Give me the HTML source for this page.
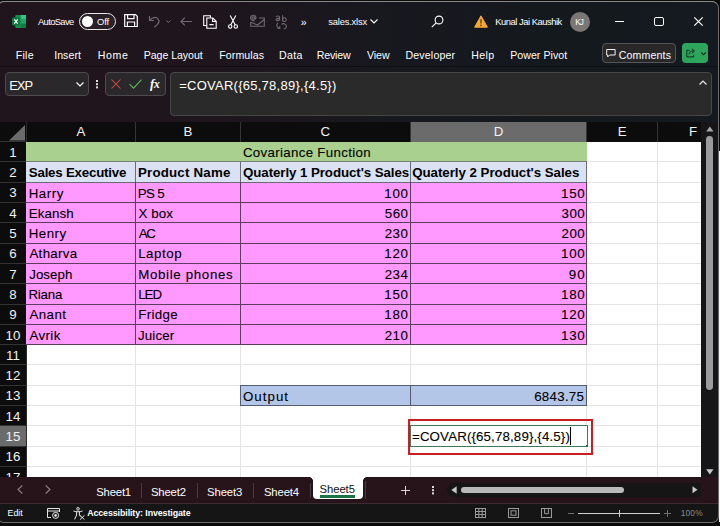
<!DOCTYPE html><html><head><meta charset="utf-8"><title>sales.xlsx - Excel</title><style>
*{box-sizing:border-box;margin:0;padding:0}
html,body{width:720px;height:526px;overflow:hidden;background:#0a0a0a}
body{font-family:"Liberation Sans",sans-serif;color:#fff;position:relative}
.abs,.t,.ch{position:absolute}
.t,.ch{white-space:pre;line-height:1}
.k{color:#000;-webkit-text-stroke:0.1px #000}
#win{position:absolute;left:-3.5px;top:1px;width:722.3px;height:522px;border-radius:7px;overflow:hidden;background:#0d0d0d;}
#win>div#in{position:absolute;left:3.5px;top:-1px;width:720px;height:526px}
#winb{position:absolute;left:-3.5px;top:1px;width:722.3px;height:522px;border-radius:7px;border:1px solid #6c6c6c;border-top-color:#8a8a8a;pointer-events:none}
#topbg{position:absolute;left:0;top:0;width:720px;height:122px;background:linear-gradient(90deg,#21151d 0%,#1f151d 28%,#18181f 52%,#14191e 75%,#141a1f 100%)}
.b{font-weight:700}
.kb{color:#000}
.ch{font-size:13.3px;color:#f2f2f2;text-align:center}
svg{position:absolute;overflow:visible}
</style></head><body>
<div class="abs" style="left:718.5px;top:151px;width:2px;height:371px;background:#f4f4f4"></div>
<div id="win"><div id="in">
<div id="topbg"></div>
<svg style="left:12px;top:14.5px" width="14" height="13" viewBox="0 0 14 13"><rect x="3.5" y="0" width="10.5" height="13" rx="1.2" fill="#21a366"/><rect x="8.7" y="0" width="5.3" height="4.3" fill="#33c481"/><rect x="8.7" y="4.3" width="5.3" height="4.4" fill="#21a366"/><rect x="8.7" y="8.7" width="5.3" height="4.3" fill="#107c41"/><rect x="3.5" y="0" width="5.2" height="13" fill="#107c41" opacity=".55"/><rect x="0" y="2.6" width="8" height="7.8" rx="1" fill="#0f7a40"/><path d="M2.3 4.3 L5.7 8.7 M5.7 4.3 L2.3 8.7" stroke="#fff" stroke-width="1.2" fill="none"/></svg>
<span class="t" style="left:38.00px;top:17.00px;font-size:9.4px;letter-spacing:-0.636px;">AutoSave</span>
<div class="abs" style="left:79px;top:13px;width:36.5px;height:17px;border:1px solid #e8e8e8;border-radius:9px;background:#2a2128"></div>
<div class="abs" style="left:81.7px;top:15.7px;width:11.6px;height:11.6px;border-radius:6px;background:#fff"></div>
<span class="t" style="left:97.00px;top:17.00px;font-size:9.4px;letter-spacing:-0.087px;">Off</span>
<svg style="left:124.4px;top:14.4px" width="14" height="13.2" viewBox="0 0 14 13.2" fill="none" stroke="#fff" stroke-width="1.2"><path d="M0.7 0.7 H11.6 L13.3 2.4 V12.5 H0.7z"/><path d="M3.6 0.8 V4.6 H10 V0.8"/><path d="M3.4 12.5 V8 H10.6 V12.5"/></svg>
<svg style="left:148px;top:15px" width="13" height="13" viewBox="0 0 13 13" fill="none" stroke="#6f6870" stroke-width="1.2"><path d="M1.5 1 V5.5 H6"/><path d="M1.8 5.3 C4 2.2 8 1.6 10 3.8 C12.2 6.2 10.6 9 6.2 12.2"/></svg>
<svg style="left:166px;top:19.8px" width="4.8" height="3" viewBox="0 0 4.8 3" fill="none" stroke="#6f6870" stroke-width="1"><path d="M0.3 0.4 L2.4 2.5 L4.5 0.4"/></svg>
<svg style="left:180px;top:16.5px" width="12" height="9" viewBox="0 0 12 9" fill="none" stroke="#6f6870" stroke-width="1.2"><path d="M12 4.5 H1 M4.8 0.6 L1 4.5 L4.8 8.4"/></svg>
<svg style="left:203px;top:14.5px" width="14" height="14" viewBox="0 0 14 14" fill="none" stroke="#fff" stroke-width="1.1"><path d="M3.6 10.5 H0.7 V0.8 H7.4 V2.8"/><path d="M3.8 3 H9.8 L13.2 6.3 V13.2 H3.8z"/><path d="M9.6 3.2 V6.5 H13"/><path d="M6.4 9.6 H10.6" stroke-width="1.3"/></svg>
<svg style="left:228px;top:14.5px" width="10" height="14" viewBox="0 0 10 14" fill="none" stroke="#fff" stroke-width="1.1"><path d="M2.2 0.5 L7.3 10 M7.8 0.5 L2.7 10"/><circle cx="2.2" cy="11.5" r="1.7"/><circle cx="7.8" cy="11.5" r="1.7"/></svg>
<svg style="left:250px;top:15px" width="15" height="12" viewBox="0 0 15 12" fill="none" stroke="#6f6870" stroke-width="1.1"><path d="M9 3 H14.3 V11.3 H0.7 V7"/><path d="M1 7.2 L7.5 10 L14.3 4.5"/><circle cx="3.2" cy="3" r="1.2"/><path d="M4.6 1.6 V4 C6.2 4.6 6.6 1.2 4.6 0.5 C2.6 -0.3 0.4 1 0.6 3.2 C0.8 5.4 3 6 4.6 5.4"/></svg>
<svg style="left:275px;top:14.5px" width="14" height="15" viewBox="0 0 14 15" fill="none" stroke="#6f6870" stroke-width="1.1"><path d="M4.6 5.5 V2.6 C4.6 0.4 1.2 0.6 1 2 M4.6 3.4 C0.6 3 0.2 5.6 2.4 5.6 C3.6 5.6 4.6 4.6 4.6 3.8"/><path d="M7.6 0.3 V6.6 M7.6 3.6 C8.8 2.2 11.2 2.6 11.2 4.6 C11.2 6.6 8.8 7 7.6 5.6"/><path d="M3 8 C1 9.6 1.4 12.6 4.6 13.2 M4.8 11.2 V13.4 H2.6"/><path d="M6.6 9.4 C8 8 11 8.4 11.4 11 C11.6 12.8 10 14 8.6 14"/></svg>
<span class="t" style="left:300.82px;top:16.60px;font-size:10.5px;letter-spacing:0.000px;">»</span>
<span class="t" style="left:328.35px;top:17.00px;font-size:9.4px;letter-spacing:-0.206px;">sales.xlsx</span>
<svg style="left:370px;top:19px" width="8" height="5" viewBox="0 0 8 5" fill="none" stroke="#fff" stroke-width="1.1"><path d="M0.5 0.5 L4 4 L7.5 0.5"/></svg>
<svg style="left:431px;top:15px" width="13" height="13" viewBox="0 0 13 13" fill="none" stroke="#fff" stroke-width="1.1"><circle cx="8" cy="5" r="3.9"/><path d="M5.2 7.8 L0.8 12.2"/></svg>
<svg style="left:473.5px;top:14.5px" width="14" height="13" viewBox="0 0 14 13"><path d="M7 0.8 L13.4 12.2 H0.6z" fill="#f4a836" stroke="#f4a836" stroke-width="1" stroke-linejoin="round"/><path d="M7 4.2 V8.4" stroke="#5a3a0a" stroke-width="1.3"/><circle cx="7" cy="10.4" r=".8" fill="#5a3a0a"/></svg>
<span class="t" style="left:495.25px;top:17.00px;font-size:9.4px;letter-spacing:-0.472px;">Kunal Jai Kaushik</span>
<div class="abs" style="left:569.5px;top:11.5px;width:20px;height:20px;border-radius:10px;background:#7c7675"></div>
<span class="t" style="left:575.27px;top:18.60px;font-size:8.2px;letter-spacing:-1.075px;">KJ</span>
<div class="abs" style="left:615px;top:20.5px;width:9px;height:1.2px;background:#fff"></div>
<div class="abs" style="left:654px;top:16.5px;width:9.5px;height:9.5px;border:1.2px solid #fff;border-radius:2px"></div>
<svg style="left:693.5px;top:16.5px" width="9" height="9" viewBox="0 0 9 9" stroke="#fff" stroke-width="1.2"><path d="M0.3 0.3 L8.7 8.7 M8.7 0.3 L0.3 8.7"/></svg>
<span class="t" style="left:15.73px;top:50.00px;font-size:10.6px;letter-spacing:0.250px;">File</span>
<span class="t" style="left:54.20px;top:50.00px;font-size:10.6px;letter-spacing:0.045px;">Insert</span>
<span class="t" style="left:97.83px;top:50.00px;font-size:10.6px;letter-spacing:0.575px;">Home</span>
<span class="t" style="left:143.72px;top:50.00px;font-size:10.6px;letter-spacing:-0.050px;">Page Layout</span>
<span class="t" style="left:219.32px;top:50.00px;font-size:10.6px;letter-spacing:0.075px;">Formulas</span>
<span class="t" style="left:279.02px;top:50.00px;font-size:10.6px;letter-spacing:0.300px;">Data</span>
<span class="t" style="left:316.73px;top:50.00px;font-size:10.6px;letter-spacing:-0.155px;">Review</span>
<span class="t" style="left:366.88px;top:50.00px;font-size:10.6px;letter-spacing:-0.008px;">View</span>
<span class="t" style="left:405.52px;top:50.00px;font-size:10.6px;letter-spacing:0.156px;">Developer</span>
<span class="t" style="left:471.32px;top:50.00px;font-size:10.6px;letter-spacing:0.367px;">Help</span>
<span class="t" style="left:510.23px;top:50.00px;font-size:10.6px;letter-spacing:0.037px;">Power Pivot</span>
<div class="abs" style="left:602px;top:43px;width:73.5px;height:20px;border:1px solid #555;border-radius:4px;background:#282829"></div>
<svg style="left:605.6px;top:48.6px" width="9.8" height="8.6" viewBox="0 0 11 10" fill="none" stroke="#fff" stroke-width="1.1"><path d="M0.6 0.6 H10.4 V7 H4 L1.8 9.2 V7 H0.6z"/></svg>
<span class="t" style="left:618.80px;top:50.00px;font-size:10.6px;letter-spacing:0.132px;">Comments</span>
<div class="abs" style="left:682px;top:43px;width:25.5px;height:20px;border-radius:4px;background:#2ea55d"></div>
<svg style="left:686px;top:48.4px" width="9.8" height="9.6" viewBox="0 0 11 11" fill="none" stroke="#102a18" stroke-width="1.1"><path d="M4 2.6 H0.8 V10.2 H8.6 V7.6"/><path d="M3.4 7.4 C3.6 4.6 5.4 3.4 8 3.4 M6.6 0.8 L9.6 3.4 L6.6 6"/></svg>
<svg style="left:700.5px;top:51.5px" width="5" height="4" viewBox="0 0 5 4" fill="none" stroke="#102a18" stroke-width="1.1"><path d="M0.3 0.5 L2.5 2.8 L4.7 0.5"/></svg>
<div class="abs" style="left:0;top:66px;width:720px;height:1px;background:rgba(0,0,0,.35)"></div>
<div class="abs" style="left:5px;top:72px;width:83.5px;height:23.5px;border:1px solid #4d494c;border-radius:4px;background:#2b282b"></div>
<span class="t" style="left:9.20px;top:79.70px;font-size:12.9px;letter-spacing:-0.912px;">EXP</span>
<svg style="left:76px;top:82px" width="8" height="5" viewBox="0 0 8 5" fill="none" stroke="#fff" stroke-width="1.1"><path d="M0.5 0.5 L4 4 L7.5 0.5"/></svg>
<div class="abs" style="left:96.4px;top:80px;width:1.6px;height:1.6px;background:#ddd;box-shadow:0 3.2px 0 #ddd,0 6.4px 0 #ddd"></div>
<div class="abs" style="left:105px;top:72px;width:60.5px;height:23.5px;border:1px solid #4d494c;border-radius:4px;background:#2b282b"></div>
<svg style="left:111px;top:79px" width="10" height="10" viewBox="0 0 10 10" stroke="#dc4c47" stroke-width="1.05"><path d="M0.5 0.5 L9.5 9.5 M9.5 0.5 L0.5 9.5"/></svg>
<svg style="left:129px;top:79px" width="13" height="10" viewBox="0 0 13 10" fill="none" stroke="#58b860" stroke-width="1.05"><path d="M0.5 5.2 L4.6 9.2 L12.5 0.6"/></svg>
<span class="t" style="left:150px;top:76.5px;font-size:13px;color:#fff;font-family:'Liberation Serif',serif;font-style:italic;letter-spacing:-0.3px;font-weight:700">f<span style="font-size:11.5px">x</span></span>
<div class="abs" style="left:169.5px;top:71.8px;width:542px;height:44px;border:1px solid #474747;border-radius:4px;background:#2a2a2a"></div>
<span class="t" style="left:179.18px;top:78.75px;font-size:13px;letter-spacing:0.259px;">=COVAR({65,78,89},{4.5})</span>
<svg style="left:699px;top:80px" width="8" height="5" viewBox="0 0 8 5" fill="none" stroke="#e8e8e8" stroke-width="1.2"><path d="M0.5 4.5 L4 1 L7.5 4.5"/></svg>
<div class="abs" style="left:0;top:122px;width:720px;height:355.2px;background:#0c0c0c"></div>
<div class="abs" style="left:26px;top:141.6px;width:675px;height:335.6px;background:#fff"></div>
<div class="abs" style="left:26px;top:161.4px;width:675px;height:1px;background:#e4e4e4"></div>
<div class="abs" style="left:26px;top:181.7px;width:675px;height:1px;background:#e4e4e4"></div>
<div class="abs" style="left:26px;top:202.0px;width:675px;height:1px;background:#e4e4e4"></div>
<div class="abs" style="left:26px;top:222.3px;width:675px;height:1px;background:#e4e4e4"></div>
<div class="abs" style="left:26px;top:242.6px;width:675px;height:1px;background:#e4e4e4"></div>
<div class="abs" style="left:26px;top:262.9px;width:675px;height:1px;background:#e4e4e4"></div>
<div class="abs" style="left:26px;top:283.2px;width:675px;height:1px;background:#e4e4e4"></div>
<div class="abs" style="left:26px;top:303.5px;width:675px;height:1px;background:#e4e4e4"></div>
<div class="abs" style="left:26px;top:323.8px;width:675px;height:1px;background:#e4e4e4"></div>
<div class="abs" style="left:26px;top:344.1px;width:675px;height:1px;background:#e4e4e4"></div>
<div class="abs" style="left:26px;top:364.4px;width:675px;height:1px;background:#e4e4e4"></div>
<div class="abs" style="left:26px;top:384.7px;width:675px;height:1px;background:#e4e4e4"></div>
<div class="abs" style="left:26px;top:405.0px;width:675px;height:1px;background:#e4e4e4"></div>
<div class="abs" style="left:26px;top:425.3px;width:675px;height:1px;background:#e4e4e4"></div>
<div class="abs" style="left:26px;top:445.6px;width:675px;height:1px;background:#e4e4e4"></div>
<div class="abs" style="left:26px;top:465.9px;width:675px;height:1px;background:#e4e4e4"></div>
<div class="abs" style="left:135.2px;top:141.6px;width:1px;height:335.6px;background:#e4e4e4"></div>
<div class="abs" style="left:239.9px;top:141.6px;width:1px;height:335.6px;background:#e4e4e4"></div>
<div class="abs" style="left:409.5px;top:141.6px;width:1px;height:335.6px;background:#e4e4e4"></div>
<div class="abs" style="left:586.4px;top:141.6px;width:1px;height:335.6px;background:#e4e4e4"></div>
<div class="abs" style="left:657.2px;top:141.6px;width:1px;height:335.6px;background:#e4e4e4"></div>
<div class="abs" style="left:410px;top:122px;width:176.89999999999998px;height:19.599999999999994px;background:#6b6b6b"></div>
<span class="ch" style="left:26px;width:109.69999999999999px;top:125.4px">A</span>
<div class="abs" style="left:135.2px;top:122px;width:1px;height:19.599999999999994px;background:#353535"></div>
<span class="ch" style="left:135.7px;width:104.70000000000002px;top:125.4px">B</span>
<div class="abs" style="left:239.9px;top:122px;width:1px;height:19.599999999999994px;background:#353535"></div>
<span class="ch" style="left:240.4px;width:169.6px;top:125.4px">C</span>
<div class="abs" style="left:409.5px;top:122px;width:1px;height:19.599999999999994px;background:#353535"></div>
<span class="ch" style="left:410px;width:176.89999999999998px;top:125.4px">D</span>
<div class="abs" style="left:586.4px;top:122px;width:1px;height:19.599999999999994px;background:#353535"></div>
<span class="ch" style="left:586.9px;width:70.80000000000007px;top:125.4px">E</span>
<div class="abs" style="left:657.2px;top:122px;width:1px;height:19.599999999999994px;background:#353535"></div>
<span class="ch" style="left:657.7px;width:70.79999999999995px;top:125.4px">F</span>
<div class="abs" style="left:25.5px;top:122px;width:1px;height:355.2px;background:#2c2c2c"></div>
<div class="abs" style="left:0px;top:140.9px;width:26px;height:1px;background:#333"></div>
<svg style="left:9.2px;top:124.5px" width="16" height="15.5" viewBox="0 0 16 15.5"><path d="M16 0 V15.5 H0z" fill="#6b6b6b"/></svg>
<div class="abs" style="left:0;top:425.8px;width:26px;height:20.3px;background:#6b6b6b"></div>
<span class="ch" style="left:0;width:26px;top:145.79999999999998px">1</span>
<div class="abs" style="left:0;top:161.4px;width:26px;height:1px;background:#333"></div>
<span class="ch" style="left:0;width:26px;top:166.1px">2</span>
<div class="abs" style="left:0;top:181.7px;width:26px;height:1px;background:#333"></div>
<span class="ch" style="left:0;width:26px;top:186.39999999999998px">3</span>
<div class="abs" style="left:0;top:202.0px;width:26px;height:1px;background:#333"></div>
<span class="ch" style="left:0;width:26px;top:206.7px">4</span>
<div class="abs" style="left:0;top:222.3px;width:26px;height:1px;background:#333"></div>
<span class="ch" style="left:0;width:26px;top:227.0px">5</span>
<div class="abs" style="left:0;top:242.6px;width:26px;height:1px;background:#333"></div>
<span class="ch" style="left:0;width:26px;top:247.29999999999998px">6</span>
<div class="abs" style="left:0;top:262.9px;width:26px;height:1px;background:#333"></div>
<span class="ch" style="left:0;width:26px;top:267.59999999999997px">7</span>
<div class="abs" style="left:0;top:283.2px;width:26px;height:1px;background:#333"></div>
<span class="ch" style="left:0;width:26px;top:287.9px">8</span>
<div class="abs" style="left:0;top:303.5px;width:26px;height:1px;background:#333"></div>
<span class="ch" style="left:0;width:26px;top:308.2px">9</span>
<div class="abs" style="left:0;top:323.8px;width:26px;height:1px;background:#333"></div>
<span class="ch" style="left:0;width:26px;top:328.5px">10</span>
<div class="abs" style="left:0;top:344.1px;width:26px;height:1px;background:#333"></div>
<span class="ch" style="left:0;width:26px;top:348.8px">11</span>
<div class="abs" style="left:0;top:364.4px;width:26px;height:1px;background:#333"></div>
<span class="ch" style="left:0;width:26px;top:369.09999999999997px">12</span>
<div class="abs" style="left:0;top:384.7px;width:26px;height:1px;background:#333"></div>
<span class="ch" style="left:0;width:26px;top:389.4px">13</span>
<div class="abs" style="left:0;top:405.0px;width:26px;height:1px;background:#333"></div>
<span class="ch" style="left:0;width:26px;top:409.7px">14</span>
<div class="abs" style="left:0;top:425.3px;width:26px;height:1px;background:#333"></div>
<span class="ch" style="left:0;width:26px;top:430.0px">15</span>
<div class="abs" style="left:0;top:445.6px;width:26px;height:1px;background:#333"></div>
<span class="ch" style="left:0;width:26px;top:450.3px">16</span>
<div class="abs" style="left:0;top:465.9px;width:26px;height:1px;background:#333"></div>
<span class="ch" style="left:0;width:26px;top:470.59999999999997px">17</span>
<div class="abs" style="left:0;top:486.2px;width:26px;height:1px;background:#333"></div>
<div class="abs" style="left:26px;top:141.6px;width:560.9px;height:20.3px;background:#a9d08e"></div>
<div class="abs" style="left:26px;top:161.9px;width:560.9px;height:20.3px;background:#d9e1f2"></div>
<div class="abs" style="left:26px;top:182.2px;width:560.9px;height:162.40000000000003px;background:#ff99ff"></div>
<div class="abs" style="left:240.4px;top:385.2px;width:346.5px;height:20.3px;background:#b4c6e7"></div>
<div class="abs" style="left:26px;top:161.4px;width:560.9px;height:1px;background:#777f70"></div>
<div class="abs" style="left:26px;top:181.7px;width:560.9px;height:1px;background:#6b6b78"></div>
<div class="abs" style="left:26px;top:202.0px;width:560.9px;height:1px;background:#5e3b60"></div>
<div class="abs" style="left:26px;top:222.3px;width:560.9px;height:1px;background:#5e3b60"></div>
<div class="abs" style="left:26px;top:242.6px;width:560.9px;height:1px;background:#5e3b60"></div>
<div class="abs" style="left:26px;top:262.9px;width:560.9px;height:1px;background:#5e3b60"></div>
<div class="abs" style="left:26px;top:283.2px;width:560.9px;height:1px;background:#5e3b60"></div>
<div class="abs" style="left:26px;top:303.5px;width:560.9px;height:1px;background:#5e3b60"></div>
<div class="abs" style="left:26px;top:323.8px;width:560.9px;height:1px;background:#5e3b60"></div>
<div class="abs" style="left:26px;top:344.1px;width:560.9px;height:1px;background:#5e3b60"></div>
<div class="abs" style="left:135.2px;top:161.9px;width:1px;height:20.3px;background:#6a6e7a"></div>
<div class="abs" style="left:135.2px;top:182.2px;width:1px;height:162.40000000000003px;background:#5e3b60"></div>
<div class="abs" style="left:239.9px;top:161.9px;width:1px;height:20.3px;background:#6a6e7a"></div>
<div class="abs" style="left:239.9px;top:182.2px;width:1px;height:162.40000000000003px;background:#5e3b60"></div>
<div class="abs" style="left:409.5px;top:161.9px;width:1px;height:20.3px;background:#6a6e7a"></div>
<div class="abs" style="left:409.5px;top:182.2px;width:1px;height:162.40000000000003px;background:#5e3b60"></div>
<div class="abs" style="left:586.4px;top:161.9px;width:1px;height:20.3px;background:#6a6e7a"></div>
<div class="abs" style="left:586.4px;top:182.2px;width:1px;height:162.40000000000003px;background:#5e3b60"></div>
<div class="abs" style="left:239.9px;top:384.7px;width:347.5px;height:20.900000000000002px;border:1px solid #535c74"></div>
<div class="abs" style="left:409.5px;top:385.2px;width:1px;height:20.3px;background:#535c74"></div>
<span class="t k" style="left:242.88px;top:145.90px;font-size:13.3px;letter-spacing:0.322px;">Covariance Function</span>
<span class="t kb" style="left:28.82px;top:166.20px;font-size:13.3px;letter-spacing:-0.216px;font-weight:700;">Sales Executive</span>
<span class="t kb" style="left:137.93px;top:166.20px;font-size:13.3px;letter-spacing:0.205px;font-weight:700;">Product Name</span>
<span class="t kb" style="left:243.00px;top:166.20px;font-size:13.3px;letter-spacing:-0.071px;font-weight:700;">Quaterly 1 Product's Sales</span>
<span class="t kb" style="left:412.20px;top:166.20px;font-size:13.3px;letter-spacing:-0.031px;font-weight:700;">Quaterly 2 Product's Sales</span>
<span class="t k" style="left:28.68px;top:186.50px;font-size:13.3px;letter-spacing:0.562px;">Harry</span>
<span class="t k" style="left:137.68px;top:186.50px;font-size:13.3px;letter-spacing:-0.642px;">PS 5</span>
<span class="t k" style="left:384.29px;top:186.50px;font-size:13.3px;letter-spacing:0.743px;">100</span>
<span class="t k" style="left:561.09px;top:186.50px;font-size:13.3px;letter-spacing:0.743px;">150</span>
<span class="t k" style="left:28.68px;top:206.80px;font-size:13.3px;letter-spacing:0.105px;">Ekansh</span>
<span class="t k" style="left:138.43px;top:206.80px;font-size:13.3px;letter-spacing:0.131px;">X box</span>
<span class="t k" style="left:384.79px;top:206.80px;font-size:13.3px;letter-spacing:0.493px;">560</span>
<span class="t k" style="left:561.59px;top:206.80px;font-size:13.3px;letter-spacing:0.493px;">300</span>
<span class="t k" style="left:28.68px;top:227.10px;font-size:13.3px;letter-spacing:0.512px;">Henry</span>
<span class="t k" style="left:138.80px;top:227.10px;font-size:13.3px;letter-spacing:-1.475px;">AC</span>
<span class="t k" style="left:384.66px;top:227.10px;font-size:13.3px;letter-spacing:0.555px;">230</span>
<span class="t k" style="left:561.47px;top:227.10px;font-size:13.3px;letter-spacing:0.555px;">200</span>
<span class="t k" style="left:29.40px;top:247.40px;font-size:13.3px;letter-spacing:0.337px;">Atharva</span>
<span class="t k" style="left:138.18px;top:247.40px;font-size:13.3px;letter-spacing:0.540px;">Laptop</span>
<span class="t k" style="left:384.29px;top:247.40px;font-size:13.3px;letter-spacing:0.743px;">120</span>
<span class="t k" style="left:561.09px;top:247.40px;font-size:13.3px;letter-spacing:0.743px;">100</span>
<span class="t k" style="left:29.15px;top:267.70px;font-size:13.3px;letter-spacing:0.090px;">Joseph</span>
<span class="t k" style="left:138.18px;top:267.70px;font-size:13.3px;letter-spacing:0.669px;">Mobile phones</span>
<span class="t k" style="left:384.66px;top:267.70px;font-size:13.3px;letter-spacing:0.493px;">234</span>
<span class="t k" style="left:568.84px;top:267.70px;font-size:13.3px;letter-spacing:1.115px;">90</span>
<span class="t k" style="left:28.48px;top:288.00px;font-size:13.3px;letter-spacing:-0.231px;">Riana</span>
<span class="t k" style="left:138.18px;top:288.00px;font-size:13.3px;letter-spacing:-1.013px;">LED</span>
<span class="t k" style="left:384.29px;top:288.00px;font-size:13.3px;letter-spacing:0.743px;">150</span>
<span class="t k" style="left:561.09px;top:288.00px;font-size:13.3px;letter-spacing:0.743px;">180</span>
<span class="t k" style="left:29.40px;top:308.30px;font-size:13.3px;letter-spacing:0.444px;">Anant</span>
<span class="t k" style="left:138.18px;top:308.30px;font-size:13.3px;letter-spacing:0.380px;">Fridge</span>
<span class="t k" style="left:384.29px;top:308.30px;font-size:13.3px;letter-spacing:0.743px;">180</span>
<span class="t k" style="left:561.09px;top:308.30px;font-size:13.3px;letter-spacing:0.743px;">120</span>
<span class="t k" style="left:29.40px;top:328.60px;font-size:13.3px;letter-spacing:0.412px;">Avrik</span>
<span class="t k" style="left:138.05px;top:328.60px;font-size:13.3px;letter-spacing:0.140px;">Juicer</span>
<span class="t k" style="left:384.66px;top:328.60px;font-size:13.3px;letter-spacing:0.555px;">210</span>
<span class="t k" style="left:561.09px;top:328.60px;font-size:13.3px;letter-spacing:0.743px;">130</span>
<span class="t k" style="left:242.97px;top:389.50px;font-size:13.3px;letter-spacing:1.030px;">Output</span>
<span class="t k" style="left:534.17px;top:389.50px;font-size:13.3px;letter-spacing:0.288px;">6843.75</span>
<div class="abs" style="left:407.6px;top:418.8px;width:185.6px;height:35.8px;border:2.7px solid #cc1c24"></div>
<div class="abs" style="left:409.5px;top:425.2px;width:178.09999999999997px;height:21.5px;border:1px solid #3d7a55;background:#fff"></div>
<div class="abs" style="left:585.6999999999999px;top:444.90000000000003px;width:2.4px;height:2.4px;background:#2c6e45"></div>
<span class="t k" style="left:411.98px;top:430.10px;font-size:13.3px;letter-spacing:0.142px;">=COVAR({65,78,89},{4.5})</span>
<div class="abs" style="left:569.8px;top:426.8px;width:1px;height:18.5px;background:#000"></div>
<div class="abs" style="left:701px;top:122px;width:19px;height:355.2px;background:#161618"></div>
<svg style="left:705.8px;top:126px" width="7.7" height="6" viewBox="0 0 8 6"><path d="M4 0.3 L7.8 5.7 H0.2z" fill="#a8a8a8"/></svg>
<div class="abs" style="left:706.1px;top:135.7px;width:6.9px;height:254.7px;border-radius:3.4px;background:#9b9b9b"></div>
<svg style="left:705.8px;top:469px" width="7.7" height="5.8" viewBox="0 0 8 6"><path d="M4 5.7 L7.8 0.3 H0.2z" fill="#c8c8c8"/></svg>
<div class="abs" style="left:0;top:477.2px;width:720px;height:27px;background:#26141a"></div>
<div class="abs" style="left:0;top:503.6px;width:720px;height:20px;background:#151515"></div>
<div class="abs" style="left:0;top:503.3px;width:720px;height:1px;background:#3a2c31"></div>
<div class="abs" style="left:313px;top:476.2px;width:49.5px;height:23.3px;background:#fff;border-radius:0 0 4px 4px"></div>
<div class="abs" style="left:320px;top:495.4px;width:35px;height:2.2px;background:#1e7145"></div>
<div class="abs" style="left:309px;top:477.2px;width:4px;height:4px;background:radial-gradient(circle at 0 100%,#26141a 3.6px,#fff 4.2px)"></div>
<div class="abs" style="left:362.5px;top:477.2px;width:4px;height:4px;background:radial-gradient(circle at 100% 100%,#26141a 3.6px,#fff 4.2px)"></div>
<svg style="left:17px;top:485px" width="6" height="9" viewBox="0 0 6 9" fill="none" stroke="#8d7f85" stroke-width="1.1"><path d="M5.3 0.5 L1 4.5 L5.3 8.5"/></svg>
<svg style="left:44.5px;top:485px" width="6" height="9" viewBox="0 0 6 9" fill="none" stroke="#8d7f85" stroke-width="1.1"><path d="M0.7 0.5 L5 4.5 L0.7 8.5"/></svg>
<span class="t" style="left:96.20px;top:486.90px;font-size:11.3px;letter-spacing:-0.170px;">Sheet1</span>
<span class="t" style="left:150.90px;top:486.90px;font-size:11.3px;letter-spacing:-0.130px;">Sheet2</span>
<span class="t" style="left:207.10px;top:486.90px;font-size:11.3px;letter-spacing:-0.110px;">Sheet3</span>
<span class="t" style="left:263.90px;top:486.90px;font-size:11.3px;letter-spacing:-0.120px;">Sheet4</span>
<span class="t" style="left:319.60px;top:484.40px;font-size:11.3px;letter-spacing:-0.095px;color:#111;">Sheet5</span>
<div class="abs" style="left:140.5px;top:483px;width:1px;height:15px;background:#4a3940"></div>
<div class="abs" style="left:196.6px;top:483px;width:1px;height:15px;background:#4a3940"></div>
<div class="abs" style="left:252.9px;top:483px;width:1px;height:15px;background:#4a3940"></div>
<div class="abs" style="left:309.5px;top:483px;width:1px;height:15px;background:#4a3940"></div>
<div class="abs" style="left:365.3px;top:481px;width:1px;height:18px;background:#4a3940"></div>
<svg style="left:400.5px;top:485.5px" width="9" height="9" viewBox="0 0 9 9" stroke="#d8d8d8" stroke-width="1"><path d="M4.5 0 V9 M0 4.5 H9"/></svg>
<div class="abs" style="left:432.3px;top:486.3px;width:1.6px;height:1.6px;background:#ddd;box-shadow:0 3.2px 0 #ddd,0 6.4px 0 #ddd"></div>
<div class="abs" style="left:447px;top:482.8px;width:254px;height:13.8px;border-radius:7px 0 0 7px;background:#151515"></div>
<svg style="left:451px;top:486px" width="6" height="8" viewBox="0 0 6 8"><path d="M0.3 4 L5.7 0.2 V7.8z" fill="#c8c8c8"/></svg>
<div class="abs" style="left:460.5px;top:486.8px;width:163.5px;height:6.4px;border-radius:3.2px;background:#b9b9b9"></div>
<svg style="left:692.4px;top:486.2px" width="6" height="7.4" viewBox="0 0 6 8"><path d="M5.7 4 L0.3 0.2 V7.8z" fill="#c8c8c8"/></svg>
<span class="t" style="left:7.55px;top:508.80px;font-size:8.8px;letter-spacing:-0.025px;">Edit</span>
<svg style="left:47px;top:507.5px" width="13" height="11" viewBox="0 0 13 11" fill="none" stroke="#e8e8e8" stroke-width="1"><path d="M0.5 9.5 V0.5 H12.5 V4 M0.5 3 H12.5 M0.5 9.5 H4"/><circle cx="8.6" cy="7.4" r="3"/><circle cx="8.6" cy="7.4" r="1" fill="#e8e8e8"/></svg>
<svg style="left:73px;top:506.5px" width="12" height="13" viewBox="0 0 12 13" fill="none" stroke="#e8e8e8" stroke-width="1"><circle cx="5" cy="1.8" r="1.3"/><path d="M0.5 4 C3.5 5 6.5 5 9.5 4 M3.6 4.8 V8 L1.6 12.4 M6.4 4.8 V8 L7.4 9.6"/><path d="M7 8.4 L11.4 12.6 M11.4 8.4 L7 12.6"/></svg>
<span class="t" style="left:87.15px;top:509.00px;font-size:8.9px;letter-spacing:-0.104px;font-weight:700;">Accessibility: Investigate</span>
<svg style="left:475px;top:507.5px" width="11" height="10" viewBox="0 0 11 10" fill="none" stroke="#9a9a9a" stroke-width="1"><rect x=".5" y=".5" width="10" height="9"/><path d="M3.8 .5 V9.5 M7.2 .5 V9.5 M.5 3.5 H10.5 M.5 6.5 H10.5"/></svg>
<svg style="left:508px;top:507.5px" width="11" height="10" viewBox="0 0 11 10" fill="none" stroke="#9a9a9a" stroke-width="1"><rect x=".5" y=".5" width="10" height="9"/><rect x="3" y="2.8" width="5" height="4.4"/></svg>
<svg style="left:541px;top:507.5px" width="11" height="10" viewBox="0 0 11 10" fill="none" stroke="#9a9a9a" stroke-width="1"><rect x=".5" y=".5" width="10" height="9"/><path d="M3.6 .5 V5.6 H7.4 V.5"/></svg>
<div class="abs" style="left:568px;top:512.6px;width:6px;height:1px;background:#6e6e6e"></div>
<div class="abs" style="left:577.7px;top:512.6px;width:82.5px;height:1px;background:#d0d0d0"></div>
<div class="abs" style="left:618.6px;top:509.5px;width:1.4px;height:7px;background:#d0d0d0"></div>
<svg style="left:664px;top:509.6px" width="7" height="7" viewBox="0 0 7 7" stroke="#6e6e6e" stroke-width="1"><path d="M3.5 0 V7 M0 3.5 H7"/></svg>
<span class="t" style="left:680.77px;top:509.00px;font-size:8.4px;letter-spacing:0.133px;color:#8a8a8a;">100%</span>
</div></div>
<div id="winb"></div>
</body></html>
